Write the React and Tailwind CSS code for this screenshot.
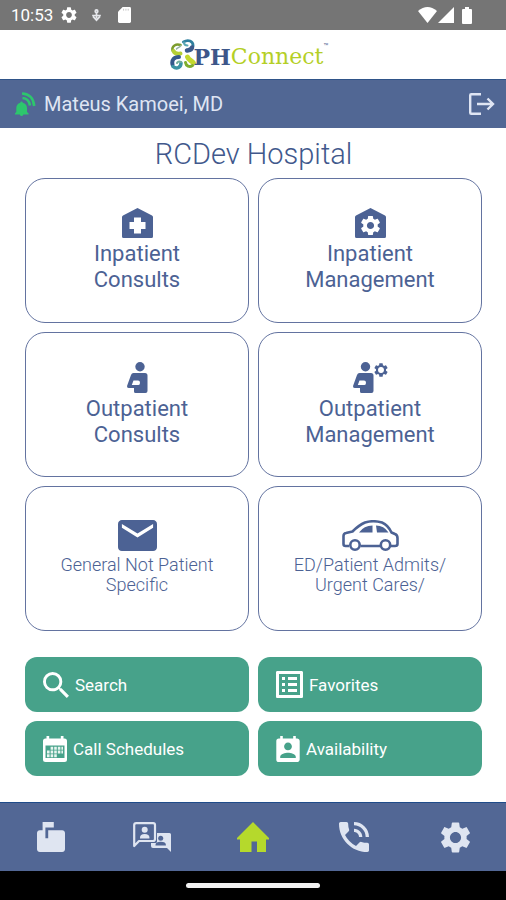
import { useState } from 'react'
import {
  MdEmail,
  MdListAlt,
  MdMarkunreadMailbox,
  MdPermContactCalendar,
  MdPhoneInTalk,
  MdSearch,
  MdSettings
} from 'react-icons/md'

function StatusBar() {
  return (
    <div className="flex h-[30px] shrink-0 items-center justify-between bg-[#757575] pl-[11px] pr-[34px] text-white">
      <div className="flex items-center">
        <span className="text-[17px] leading-5">10:53</span>
        <MdSettings viewBox="2 2 20 20" className="ml-2 size-4" />
        <svg viewBox="0 0 12 15" className="ml-[14px] h-[13px] w-[11px] text-gray-200" fill="none" stroke="currentColor" strokeWidth="2">
          <circle cx="6" cy="2.5" r="1.5" />
          <path d="M6 4v7M1 7.500h10M2 8.500l4 4.500 4-4.500" />
        </svg>
        <svg viewBox="0 0 14 17" className="ml-4 h-4 w-[13px]">
          <path fill="currentColor" d="M5 0h7.5Q14 0 14 1.500V15.500Q14 17 12.500 17h-11Q0 17 0 15.500V5z" />
          <path stroke="#c4c4c4" strokeWidth="1" d="M6 1.800v2M8.500 1.800v2M11 1.800v2" />
        </svg>
      </div>
      <div className="flex items-center">
        <svg viewBox="0 0 19 16" className="h-4 w-[19px]">
          <path fill="currentColor" d="M0 4Q9.500-4 19 4L9.500 16z" />
        </svg>
        <svg viewBox="0 0 16 16" className="ml-px size-4">
          <path fill="currentColor" d="M16 0v16H0z" />
        </svg>
        <svg viewBox="0 0 10 17" className="ml-2 h-[17px] w-2.5">
          <path fill="currentColor" d="M3 0h4v2h2q1 0 1 1v13q0 1-1 1H1q-1 0-1-1V3q0-1 1-1h2z" />
        </svg>
      </div>
    </div>
  )
}

function Logo() {
  return (
    <div className="flex items-center">
      <svg viewBox="0 0 28 32" className="-mr-1 h-8 w-7" fill="none" strokeLinecap="round">
        <path stroke="#7c9c2c" strokeWidth="2.500" d="M2.500 11.500C1.500 7 6 4.500 10.500 6" />
        <path stroke="#b5cf35" strokeWidth="4" d="M3.500 12c1 2.500 4 3 7 2.500" />
        <path stroke="#8fb0a0" strokeWidth="1.500" d="M10.500 6.500c0 2-3 2-4 3.500" />
        <path stroke="#2f7f9e" strokeWidth="2.800" d="M13.500 3C18 0 23.500 2 23 7" />
        <path stroke="#3c5a8c" strokeWidth="4.500" d="M22 8.500c-1 3-3 2.500-5 3" />
        <path stroke="#5aa6b4" strokeWidth="2" d="M14 3.500c0 2.500 2 3 3.500 3" />
        <path stroke="#35588c" strokeWidth="4" d="M9 18c-5 0-7.500 3-6.500 7.500" />
        <path stroke="#3b93a4" strokeWidth="3.500" d="M3 27.500c4 3.500 8 .5 8-3.500" />
        <path stroke="#6fae9a" strokeWidth="2" d="M11 23c-2-1-3.500 0-4 1" />
        <path stroke="#c4d82e" strokeWidth="5" d="M17.500 18c1 3 4 3.500 6 6" />
        <path stroke="#7fae2e" strokeWidth="3" d="M22.500 26.500c-3 2-6.500 .5-7-3" />
      </svg>
      <h1 className="flex pt-[5px] font-['DejaVu_Serif',serif] text-[22px] leading-7">
        <span className="font-bold text-[#3d5689]">PH</span>
        <span className="text-[#b4cf26]">Connect</span>
        <span className="font-['Roboto',sans-serif] text-[8px] leading-2 text-[#5b6c97]">™</span>
      </h1>
    </div>
  )
}

function BellIcon() {
  return (
    <svg viewBox="0 0 21 24" className="h-6 w-[21px] text-[#2dc66d]">
      <path fill="currentColor" d="M6.500 9.500q1.200 0 1.200 1.300Q12 12 12 16v4l1.500 1.300V22.500H0v-1.200L1.300 20v-4q0-4 4-5.200Q5.300 9.500 6.500 9.500zM4.800 22.500h3.600Q8 24 6.600 24T4.800 22.500z" />
      <path fill="none" stroke="currentColor" strokeWidth="2.600" d="M7 1.500Q18 2 19.200 14M7.500 6Q14 6.500 15 13.500" />
    </svg>
  )
}

function LogoutIcon() {
  return (
    <svg viewBox="0 0 26 22" className="h-[22px] w-[26px]" fill="none" stroke="currentColor" strokeWidth="2.400">
      <path d="M12 1.200H2.200Q1.200 1.200 1.200 2.200v17.600q0 1 1 1H12" />
      <path d="M8 11h15.500M18.500 5.500L24 11l-5.500 5.500" />
    </svg>
  )
}

const HOUSE = 'M15.500 0 30 7.500Q31 8 31 9v19.500q0 1.500-1.500 1.500h-28Q0 30 0 28.500V9Q0 8 1 7.500z'

function HouseCrossIcon() {
  return (
    <svg viewBox="0 0 31 30" className="h-[30px] w-[31px]">
      <path fill="currentColor" d={HOUSE} />
      <path fill="#fff" d="M12 9.500h7v4.500h4.500v7H19v4.500h-7V21H7.500v-7H12z" />
    </svg>
  )
}

function HouseGearIcon() {
  return (
    <svg viewBox="0 0 31 30" className="h-[30px] w-[31px]">
      <path fill="currentColor" d={HOUSE} />
      <MdSettings x="5.500" y="7.500" size="20" viewBox="2 2 20 20" color="#fff" />
    </svg>
  )
}

const PATIENT_BODY =
  'M6.500 11H18q2.500 0 2.500 2.500V29q0 2-2 2h-10q-1.500 0-1.500-1.500V26H2q-2.500 0-1.800-2.500L4 13q.7-2 2.500-2zM6.500 18.500L4.800 23h6.700q1.500 0 1.500-2.200t-2-2.300z'

function PatientIcon() {
  return (
    <svg viewBox="0 0 21 31" className="h-[31px] w-[21px]" fill="currentColor">
      <circle cx="13" cy="4.700" r="4.700" />
      <path fillRule="evenodd" d={PATIENT_BODY} />
    </svg>
  )
}

function PatientGearIcon() {
  return (
    <svg viewBox="0 0 35 31" className="h-[31px] w-[35px]" fill="currentColor">
      <circle cx="12.500" cy="4.700" r="4.700" />
      <path fillRule="evenodd" d={PATIENT_BODY} />
      <MdSettings x="21" y="1" size="14" viewBox="2 2 20 20" />
      <circle cx="28" cy="8" r="2.900" fill="#fff" />
    </svg>
  )
}

function MailIcon() {
  return <MdEmail viewBox="2 4 20 16" preserveAspectRatio="none" className="h-[31px] w-[39px]" />
}

function CarIcon() {
  return (
    <svg viewBox="0 0 57 31" className="h-[31px] w-[57px]" fill="none" stroke="currentColor" strokeWidth="2.600" strokeLinejoin="round">
      <path d="M7 26H3.500q-2 0-2-2v-8q0-2.500 2.500-3l6.500-1.500Q17 5 23 2.500q8-2.500 17 0Q46 5 49.500 12.500l3.500 1.500q2.500 1 2.500 4v6q0 2-2.500 2h-4M18.500 26H38" />
      <circle cx="13" cy="25" r="4.700" />
      <circle cx="43.500" cy="25" r="4.700" />
      <path stroke="none" fill="currentColor" d="M17 12.500Q22 5.500 30.500 5.500v7zM34 5.500q8 0 12.500 7H35z" />
    </svg>
  )
}

function CalendarIcon() {
  return (
    <svg viewBox="0 0 24 26" className="h-[26px] w-6">
      <path fill="currentColor" d="M3.500 0h2.700v2.500h11.600V0h2.700v2.500h1q2.500 0 2.500 2.500v18.500q0 2.500-2.500 2.500h-19Q0 26 0 23.500V5q0-2.500 2.500-2.500h1z" />
      <path fill="#47a28a" d="M2.500 9.500h19V22h-19z" />
      <path stroke="#e8f5f0" strokeWidth="3" strokeDasharray="2.600 1" d="M7.600 12.200H20M4 16H20M4 19.700h10" />
    </svg>
  )
}

function ChatPeopleIcon() {
  return (
    <svg viewBox="0 0 38 30" className="h-[30px] w-[38px]">
      <path fill="none" stroke="currentColor" strokeWidth="2.200" strokeLinejoin="round" d="M1.200 24V3q0-1.800 2-1.800h17q1.800 0 1.800 1.800v14q0 2-2 2H6z" />
      <path fill="currentColor" d="M7 16.500v-1q0-3.500 4.700-3.500t4.700 3.500v1z" />
      <circle cx="11.700" cy="7.700" r="3" fill="currentColor" />
      <path fill="currentColor" d="M24 11h12.500q1.500 0 1.500 1.500V30l-4-4H20q-2 0-2-2v-3h4.500q1.500 0 1.500-1.500z" />
      <path fill="#526795" d="M22.500 23.500v-.7q0-3 5.200-3t5.200 3v.7z" />
      <circle cx="27.700" cy="16.200" r="2.500" fill="#526795" />
    </svg>
  )
}

function HomeIcon() {
  return (
    <svg viewBox="0 0 32 30" className="h-[30px] w-8">
      <path fill="currentColor" d="M16 0l16 16v1.500h-3V30h-9V19.500h-5.500V30H3V17.500H0V16z" />
    </svg>
  )
}

const cards = [
  { label: ['Inpatient', 'Consults'], icon: HouseCrossIcon },
  { label: ['Inpatient', 'Management'], icon: HouseGearIcon },
  { label: ['Outpatient', 'Consults'], icon: PatientIcon },
  { label: ['Outpatient', 'Management'], icon: PatientGearIcon },
  { label: ['General Not Patient', 'Specific'], icon: MailIcon, small: true },
  { label: ['ED/Patient Admits/', 'Urgent Cares/'], icon: CarIcon, small: true }
]

const actions = [
  { label: 'Search', icon: <MdSearch viewBox="3 3 17.5 17.5" className="size-[26px]" /> },
  { label: 'Favorites', icon: <MdListAlt viewBox="3 3 18 18" className="size-[27px]" /> },
  { label: 'Call Schedules', icon: <CalendarIcon /> },
  { label: 'Availability', icon: <MdPermContactCalendar viewBox="3 1 18 20" className="h-[26px] w-6" /> }
]

const tabs = [
  { id: 'inbox', label: 'Inbox', icon: <MdMarkunreadMailbox viewBox="2 0 20 22" preserveAspectRatio="none" className="h-[30px] w-7" /> },
  { id: 'messages', label: 'Messages', icon: <ChatPeopleIcon /> },
  { id: 'home', label: 'Home', icon: <HomeIcon /> },
  { id: 'calls', label: 'Calls', icon: <MdPhoneInTalk viewBox="3 3 18 18" className="size-[30px]" /> },
  { id: 'settings', label: 'Settings', icon: <MdSettings viewBox="2 2 20 20" className="size-[31px]" /> }
]

export default function App() {
  const [activeTab, setActiveTab] = useState('home')

  return (
    <div className="flex min-h-screen flex-col bg-white font-['Roboto',sans-serif]">
      <StatusBar />

      <header className="flex h-[49px] shrink-0 items-center justify-center pr-2">
        <Logo />
      </header>

      {/* signed-in user */}
      <div className="flex h-[49px] shrink-0 items-center justify-between border-t border-[#2f5488] bg-[#516794] pl-[15px] pr-[11px] text-[#dfe5f3]">
        <div className="flex items-center gap-2">
          <BellIcon />
          <span className="text-[20px] leading-6">Mateus Kamoei, MD</span>
        </div>
        <button type="button" aria-label="Log out">
          <LogoutIcon />
        </button>
      </div>

      <main className="flex-1 pl-[25px] pr-6 pt-2">
        <h2 className="text-center text-[29px] font-light leading-9 text-[#41588c]">RCDev Hospital</h2>

        <div className="mt-1.5 grid grid-cols-2 gap-[9px]">
          {cards.map(({ label, icon: Icon, small }) => (
            <button
              key={label.join(' ')}
              type="button"
              className={`flex h-[145px] flex-col items-center rounded-[20px] border border-[#6373a0] text-[#4c6294] ${
                small ? 'pt-[33px] text-[18px] font-light leading-5' : 'pt-[29px] text-[22px] leading-[26px]'
              }`}
            >
              <Icon />
              <span className={small ? 'mt-1' : 'mt-[3px]'}>
                {label[0]}
                <br />
                {label[1]}
              </span>
            </button>
          ))}
        </div>

        <div className="mt-[26px] grid grid-cols-2 gap-[9px] pb-[26px]">
          {actions.map((action) => (
            <button
              key={action.label}
              type="button"
              className="flex h-[55px] items-center gap-1.5 rounded-xl bg-[#47a28a] px-[18px] text-[17px] leading-6 text-white"
            >
              {action.icon}
              {action.label}
            </button>
          ))}
        </div>
      </main>

      <nav className="grid h-[69px] shrink-0 grid-cols-5 border-t border-[#1f4c8a] bg-[#526795]">
        {tabs.map((tab) => (
          <button
            key={tab.id}
            type="button"
            aria-label={tab.label}
            onClick={() => setActiveTab(tab.id)}
            className={`flex items-center justify-center ${activeTab === tab.id ? 'text-[#b5d92c]' : 'text-[#dfe5f1]'}`}
          >
            {tab.icon}
          </button>
        ))}
      </nav>

      {/* gesture bar */}
      <div className="flex h-[29px] shrink-0 items-center justify-center bg-black">
        <div className="h-[5px] w-[134px] rounded-full bg-[#f1f1f1]" />
      </div>
    </div>
  )
}
